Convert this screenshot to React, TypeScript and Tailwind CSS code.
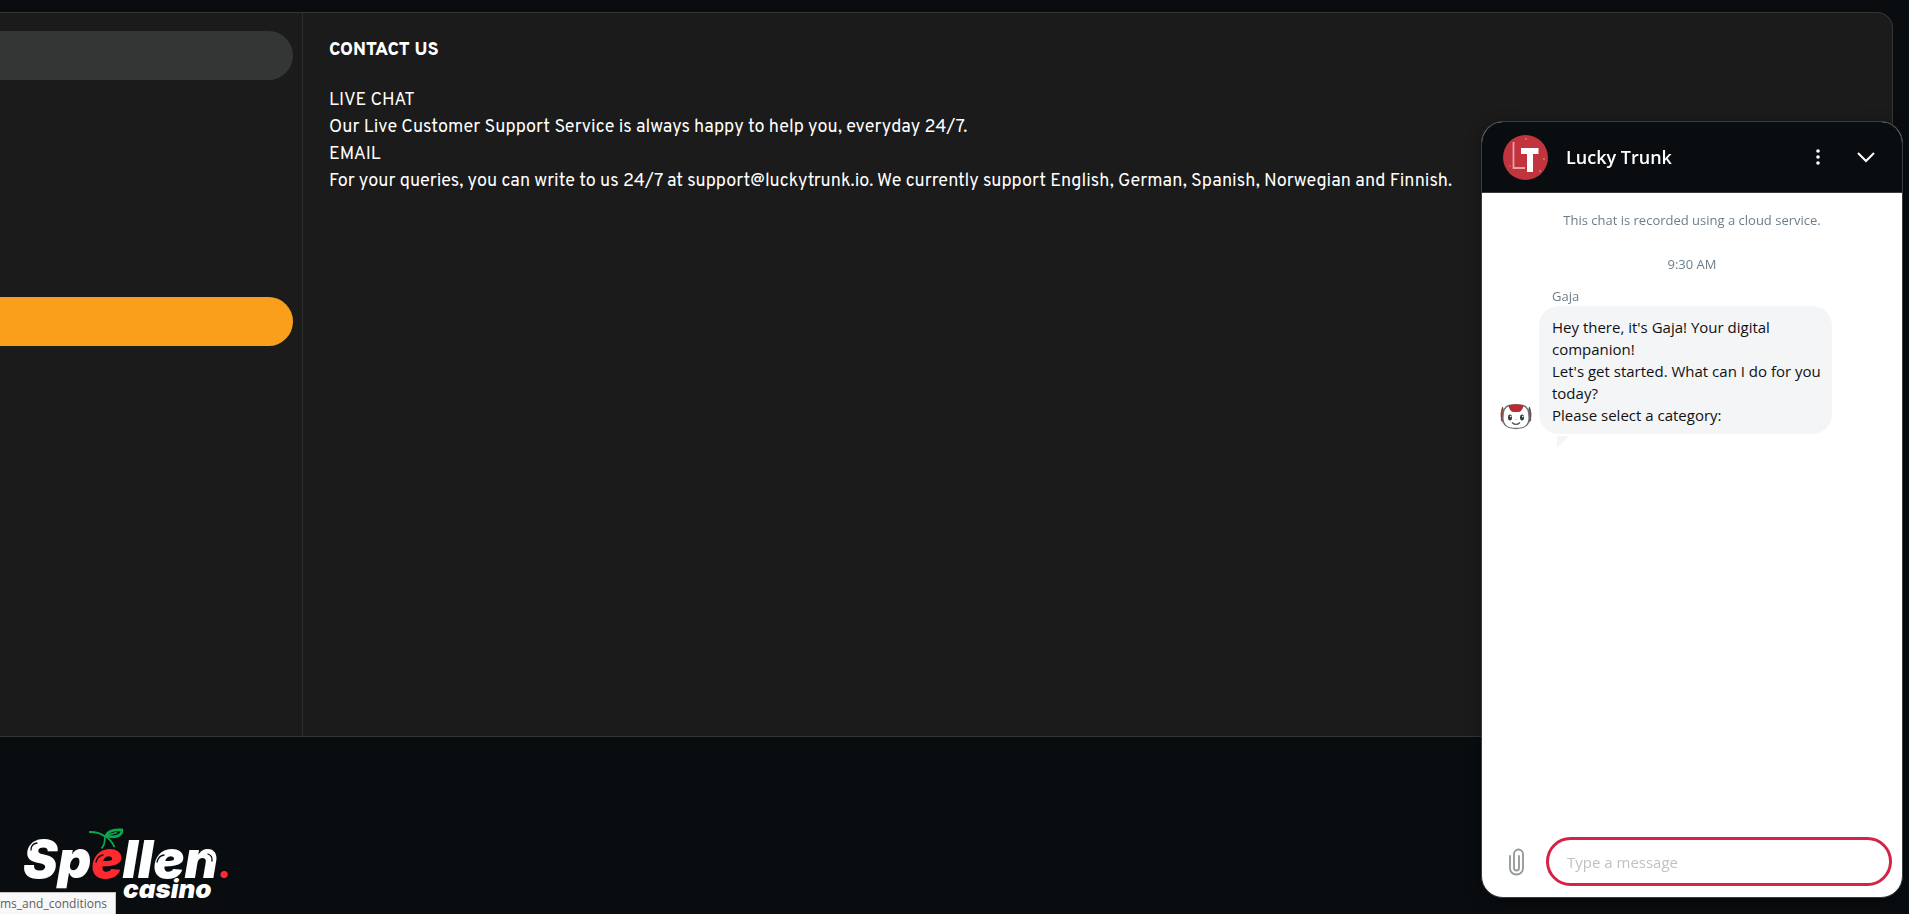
import React from "react";

function CherryStem() {
  return (
    <svg aria-hidden="true" viewBox="0 0 36 22" className="absolute top-0 left-[68px] h-[22px] w-9" fill="none">
      <path d="M1 4C8 3.800 13 5.200 17 8.500C16.500 12.500 17.500 16 13.500 20.500" stroke="#0aa84f" strokeWidth="1.800" />
      <path d="M17 8C21.500 10.500 24 14 26.500 19" stroke="#0aa84f" strokeWidth="1.800" />
      <path d="M18 7.500C20 3 25 1.200 33.800 2C34.500 8 26 10.500 18 7.500Z" stroke="#0aa84f" strokeWidth="2.800" />
      <path d="M18 7.500L29 4.500" stroke="#0aa84f" strokeWidth="1.500" />
    </svg>
  );
}

function SpellenLogo() {
  return (
    <a href="#home" className="relative block w-52 pt-[6px] pl-[3px] font-[Inter,sans-serif] font-black text-white italic">
      <span className="block text-[52px] leading-[52px] whitespace-nowrap">
        Sp<span className="text-[#ff2a2f]">e</span>llen<span className="text-[36px] leading-none text-[#ff2a2f]">.</span>
      </span>
      <span className="-mt-[10px] block pl-[100px] text-[26px] leading-[26px]">casino</span>
      <CherryStem />
      <svg aria-hidden="true" viewBox="0 0 208 60" className="absolute top-0 left-0 h-[60px] w-52" fill="none" stroke="#090d10" strokeWidth="1.300" strokeLinecap="round">
        <path d="M11 22C11 18 13.500 15.500 17 15" />
        <path d="M76 34C77 30 80 27.500 83 27" />
        <path d="M137 34C138 30 141 27.500 144 27" />
        <path d="M188 26C191 27 192.500 29 192 33" />
      </svg>
    </a>
  );
}

function BrandAvatar() {
  return (
    <svg aria-hidden="true" viewBox="0 0 45 45" className="size-[45px] shrink-0">
      <circle cx="22.500" cy="22.500" r="22.500" fill="#c1343e" />
      <path d="M10.500 7V33H22" fill="none" stroke="#e9a0a8" strokeWidth="1.800" />
      <path d="M18 13H35.500V19H30V37H24V19H18Z" fill="#fff" />
      <g fill="#dc7c62">
        <circle cx="23" cy="4" r="1" />
        <circle cx="41" cy="24" r="1" />
        <circle cx="37" cy="36" r="1" />
        <circle cx="7" cy="31" r="0.800" />
      </g>
    </svg>
  );
}

function BotAvatar() {
  return (
    <svg aria-hidden="true" viewBox="0 0 32 26" className="h-[26px] w-8 shrink-0">
      <path d="M2.500 3Q0 9 1.500 17L4 19V8ZM29.500 3Q32 9 30.500 17L28 19V8Z" fill="#a5422f" stroke="#4b4b4b" strokeWidth="0.800" />
      <path d="M9 1.500Q16 0 23 1.500Q29 3 29 13Q30 24.500 16 24.500Q2 24.500 3 13Q3 3 9 1.500Z" fill="#fff" stroke="#6f7477" strokeWidth="1.300" />
      <path d="M8.500 1.200Q16 0 23.500 1.200Q22.500 8 18 8H14Q9.500 8 8.500 1.200Z" fill="#bd2835" />
      <ellipse cx="10" cy="13.500" rx="2" ry="3" fill="#343c42" />
      <ellipse cx="22" cy="13.500" rx="2" ry="3" fill="#343c42" />
      <circle cx="10.700" cy="12.500" r="0.800" fill="#fff" />
      <circle cx="22.700" cy="12.500" r="0.800" fill="#fff" />
      <path d="M12 18.500Q16 22.500 20 18.500" fill="none" stroke="#555" strokeWidth="1.200" />
      <circle cx="16" cy="15.500" r="0.600" fill="#999" />
    </svg>
  );
}

function ChatHeader() {
  return (
    <header className="flex h-[71px] shrink-0 items-center border-b border-[#393d3f] bg-[#090d10] pr-4 pl-[21px] text-white">
      <BrandAvatar />
      <h2 className="ml-[18px] flex-1 text-[18px] font-semibold">Lucky Trunk</h2>
      <button type="button" aria-label="More options" className="mr-3 flex size-8 items-center justify-center">
        <svg aria-hidden="true" viewBox="0 0 6 18" className="h-[18px] w-1.5" fill="currentColor">
          <circle cx="3" cy="3" r="1.800" />
          <circle cx="3" cy="9" r="1.800" />
          <circle cx="3" cy="15" r="1.800" />
        </svg>
      </button>
      <button type="button" aria-label="Minimize chat" className="flex size-10 items-center justify-center">
        <svg aria-hidden="true" viewBox="0 0 18 12" className="h-3 w-[18px]" fill="none" stroke="currentColor" strokeWidth="2">
          <path d="M1 2L9 10L17 2" />
        </svg>
      </button>
    </header>
  );
}

function ChatWidget() {
  return (
    <aside className="fixed right-[6px] bottom-4 flex h-[777px] max-h-full w-[422px] flex-col overflow-hidden rounded-[22px] border border-[#393d3f] bg-white font-['Open_Sans','Noto_Sans',sans-serif] shadow-[0_4px_16px_rgba(0,0,0,0.35)]">
      <ChatHeader />
      <div className="flex-1 overflow-hidden px-[18px] pt-[19px] text-[13px] leading-4 text-[#6d7e8a]">
        <p className="text-center">This chat is recorded using a cloud service.</p>
        <p className="mt-7 text-center">9:30 AM</p>
        <p className="mt-4 pl-[52px]">Gaja</p>
        <div className="mt-0.5 flex items-end gap-[7px]">
          <div className="pb-1">
            <BotAvatar />
          </div>
          <div className="relative w-[293px] rounded-[20px] bg-[#f4f5f7] pt-[10px] pr-1 pb-2 pl-[13px] text-[15px] leading-[22px] text-[#111]">
            <p>
              Hey there, it's Gaja! Your digital
              <br />
              companion!
            </p>
            <p>Let's get started. What can I do for you today?</p>
            <p>Please select a category:</p>
            <svg aria-hidden="true" viewBox="0 0 12 12" className="absolute top-full left-[18px] mt-0.5 size-3">
              <path d="M0 0H12L0 12Z" fill="#f4f5f7" />
            </svg>
          </div>
        </div>
      </div>
      <form className="flex items-center pr-[10px] pb-[11px] pl-[26px]" onSubmit={(e) => e.preventDefault()}>
        <button type="button" aria-label="Attach a file" className="text-[#929799]">
          <svg aria-hidden="true" viewBox="0 0 18 28" className="h-7 w-[18px]" fill="none" stroke="currentColor" strokeWidth="1.800" strokeLinecap="round">
            <path d="M2 8V20.500A6.500 6 0 0 0 15 20.500V6A4.500 4.500 0 0 0 6 6V20A2.500 2.500 0 0 0 11 20V8" />
          </svg>
        </button>
        <input
          type="text"
          aria-label="Message"
          placeholder="Type a message"
          className="ml-5 h-[49px] min-w-0 flex-1 rounded-full border-3 border-[#d62245] px-[18px] text-[15px] text-[#111] outline-none placeholder:text-[#bcc3c7]"
        />
      </form>
    </aside>
  );
}

export default function App() {
  return (
    <div className="flex min-h-screen flex-col bg-[#090d10] pt-3">
      <main className="mr-4 flex min-h-[725px] rounded-tr-2xl border-t border-r border-b border-[#343636] bg-[#1b1b1b]">
        <nav aria-label="Information" className="w-[303px] shrink-0 border-r border-[#2d2e2e] pt-[18px] pr-[9px]">
          <button type="button" aria-label="Help" className="block h-[49px] w-full rounded-r-full bg-[#343635]" />
          <button type="button" aria-label="Contact us" className="mt-[217px] block h-[49px] w-full rounded-r-full bg-[#f99f1b]" />
        </nav>
        <article className="flex-1 px-[26px] pt-6 font-[Overpass,Roboto,sans-serif] text-[18px] leading-[27px] text-white">
          <h1 className="mb-[23px] font-extrabold">CONTACT US</h1>
          <p>LIVE CHAT</p>
          <p>Our Live Customer Support Service is always happy to help you, everyday 24/7.</p>
          <p>EMAIL</p>
          <p>For your queries, you can write to us 24/7 at support@luckytrunk.io. We currently support English, German, Spanish, Norwegian and Finnish.</p>
        </article>
      </main>
      <footer className="px-5 pt-[91px]">
        <SpellenLogo />
      </footer>
      <output className="fixed bottom-0 left-0 border-t border-r border-[#c4c4c4] bg-[#f8f8f8] pr-2 font-['Open_Sans',sans-serif] text-[12px] leading-[21px] text-[#5c5f62]">
        ms_and_conditions
      </output>
      <ChatWidget />
    </div>
  );
}
